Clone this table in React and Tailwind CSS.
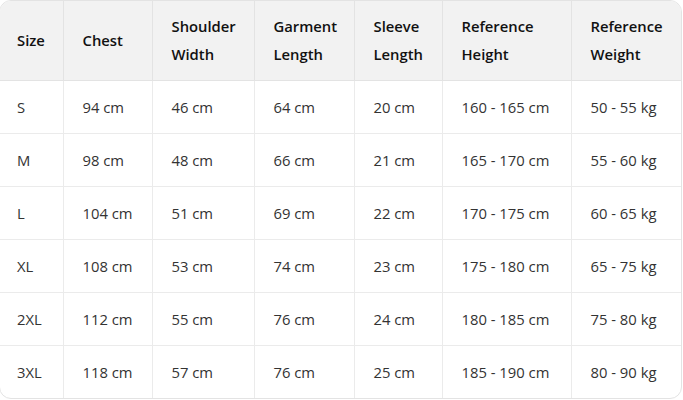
import React from "react";

const headers = [
  ["Size"],
  ["Chest"],
  ["Shoulder", "Width"],
  ["Garment", "Length"],
  ["Sleeve", "Length"],
  ["Reference", "Height"],
  ["Reference", "Weight"],
];

const widths = ["w-[63px]", "w-[89px]", "w-[102px]", "w-[100px]", "w-[88px]", "w-[129px]", "w-[110px]"];

const rows = [
  ["S", "94 cm", "46 cm", "64 cm", "20 cm", "160 - 165 cm", "50 - 55 kg"],
  ["M", "98 cm", "48 cm", "66 cm", "21 cm", "165 - 170 cm", "55 - 60 kg"],
  ["L", "104 cm", "51 cm", "69 cm", "22 cm", "170 - 175 cm", "60 - 65 kg"],
  ["XL", "108 cm", "53 cm", "74 cm", "23 cm", "175 - 180 cm", "65 - 75 kg"],
  ["2XL", "112 cm", "55 cm", "76 cm", "24 cm", "180 - 185 cm", "75 - 80 kg"],
  ["3XL", "118 cm", "57 cm", "76 cm", "25 cm", "185 - 190 cm", "80 - 90 kg"],
];

export default function App() {
  return (
    <div className="w-[683px] h-[400px] bg-white overflow-hidden" style={{ fontFamily: '"Open Sans", "Noto Sans", sans-serif' }}>
      <div className="ml-[-1px] w-[683px] border border-[#e3e3e3] rounded-[12px] overflow-hidden">
        <table className="border-collapse table-fixed w-[681px] text-[14.8px] leading-[28px]">
          <thead>
            <tr className="bg-[#f2f2f2]">
              {headers.map((h, i) => (
                <th
                  key={i}
                  className={`${widths[i]} h-[79px] text-left align-middle font-semibold text-[#111] ${i === 0 ? "pl-[17px]" : "pl-[19px]"} pr-1 py-[11px] ${i > 0 ? "border-l border-[#e3e3e3]" : ""} border-b border-[#e3e3e3]`}
                >
                  {h.map((l, j) => (
                    <div key={j}>{l}</div>
                  ))}
                </th>
              ))}
            </tr>
          </thead>
          <tbody>
            {rows.map((r, ri) => (
              <tr key={ri}>
                {r.map((c, ci) => (
                  <td
                    key={ci}
                    className={`h-[53px] ${ci === 0 ? "pl-[17px]" : "pl-[19px]"} pr-1 py-[12px] text-[#333] whitespace-nowrap ${ci > 0 ? "border-l border-[#ebebeb]" : ""} ${ri < rows.length - 1 ? "border-b border-[#ebebeb]" : ""}`}
                  >
                    {c}
                  </td>
                ))}
              </tr>
            ))}
          </tbody>
        </table>
      </div>
    </div>
  );
}
